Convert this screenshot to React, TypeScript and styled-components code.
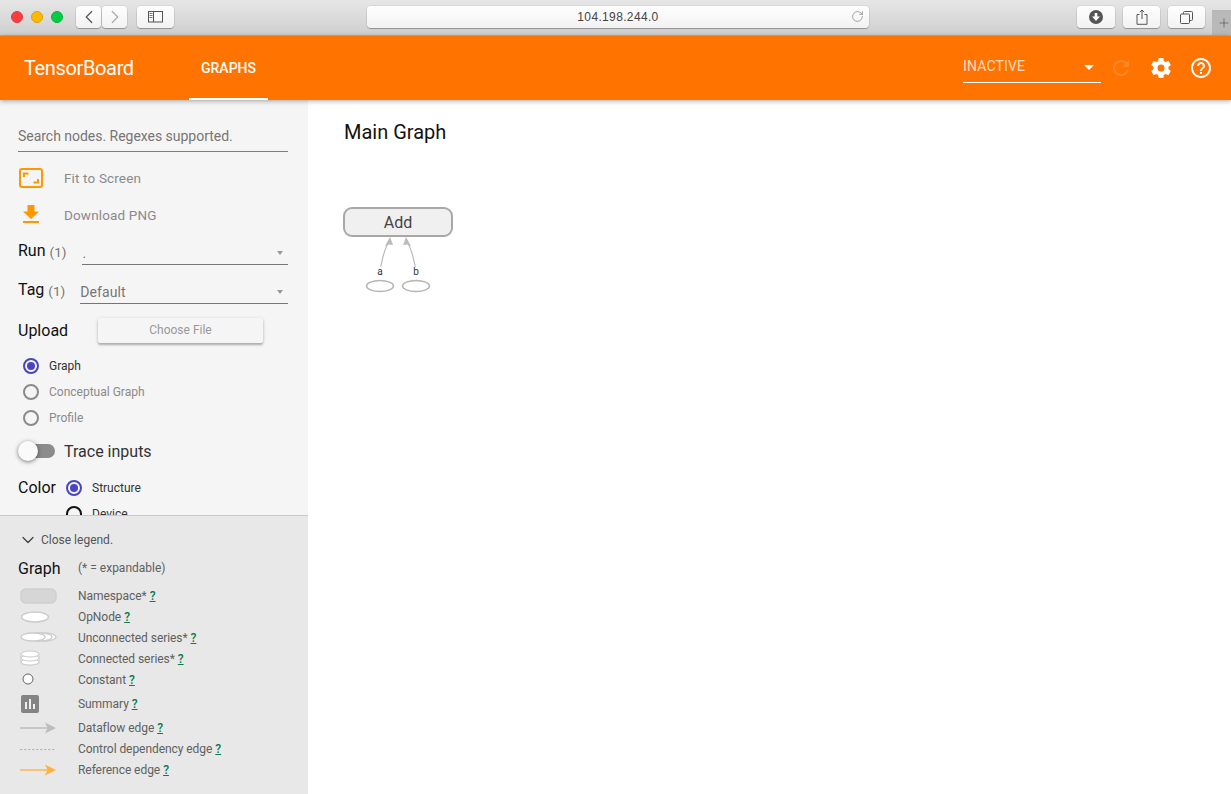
import React from "react";
import styled, { createGlobalStyle } from "styled-components";
import { ChevronDown, ChevronLeft, ChevronRight, Plus, RotateCw } from "lucide-react";

const GlobalStyle = createGlobalStyle`
  html, body { margin: 0; padding: 0; height: 100%; overflow: hidden; }
  body { font-family: Roboto, "Noto Sans", sans-serif; background: #fff; }
`;

const Page = styled.div`
  width: 1231px;
  height: 794px;
  display: flex;
  flex-direction: column;
  overflow: hidden;
`;

/* browser chrome */
const Chrome = styled.div`
  height: 29px;
  flex: none;
  display: flex;
  align-items: flex-start;
  padding-top: 6px;
  background: linear-gradient(#e6e6e6, #cfcfcf);
  border-bottom: 1px solid #b1b1b1;
  position: relative;
`;

const Lights = styled.div`
  display: flex;
  gap: 8px;
  margin: 5px 0 0 11px;
`;

const Light = styled.span<{ $c: string; $b: string }>`
  width: 12px;
  height: 12px;
  border-radius: 50%;
  background: ${(p) => p.$c};
  border: 0.5px solid ${(p) => p.$b};
  box-sizing: border-box;
`;

const ChromeBtn = styled.div<{ $w: number }>`
  width: ${(p) => p.$w}px;
  height: 22px;
  background: linear-gradient(#fefefe, #f2f2f2);
  border-radius: 4px;
  box-shadow: 0 1px 1px rgba(0, 0, 0, 0.28), 0 0 0 0.5px rgba(0, 0, 0, 0.1);
  display: flex;
  align-items: center;
  justify-content: center;
  color: #555;
  flex: none;
`;

const NavGroup = styled.div`
  display: flex;
  gap: 1px;
  margin-left: 13px;
`;

const SidebarBtnWrap = styled.div`
  margin-left: 10px;
`;

const AddressBar = styled(ChromeBtn)`
  margin-left: 193px;
  position: relative;
  font-size: 12px;
  letter-spacing: 0.35px;
  color: #444;
  font-family: "Liberation Sans", sans-serif;
`;

const Reload = styled.span`
  position: absolute;
  right: 5px;
  top: 4px;
  color: #777;
  display: flex;
`;

const RightBtns = styled.div`
  display: flex;
  gap: 8px;
  margin-left: 208px;
`;

const NewTab = styled.div`
  position: absolute;
  right: 0;
  top: 10px;
  bottom: 0;
  width: 19px;
  background: #b9b9b9;
  color: #444;
  display: flex;
  align-items: center;
  justify-content: center;
  padding-left: 5px;
  box-sizing: border-box;
`;

/* tensorboard toolbar */
const Toolbar = styled.header`
  height: 64px;
  flex: none;
  background: #ff7300;
  display: flex;
  align-items: stretch;
  color: #fff;
  box-shadow: 0 1px 5px rgba(0, 0, 0, 0.35);
  position: relative;
  z-index: 2;
`;

const Brand = styled.div`
  font-size: 20px;
  letter-spacing: -0.36px;
  margin-left: 24px;
  line-height: 64px;
  width: 165px;
  flex: none;
`;

const Tab = styled.div`
  width: 79px;
  font-size: 14px;
  font-weight: 500;
  text-align: center;
  line-height: 64px;
  position: relative;
  &::after {
    content: "";
    position: absolute;
    left: 0;
    right: 0;
    bottom: 0;
    height: 2px;
    background: #fff;
  }
`;

const ToolbarRight = styled.div`
  margin-left: auto;
  display: flex;
  align-items: center;
  padding-right: 18px;
`;

const RunSelect = styled.div`
  width: 138px;
  height: 29px;
  padding: 3px 0 2px;
  margin-top: -5px;
  border-bottom: 1px solid #fff;
  display: flex;
  align-items: center;
  justify-content: space-between;
  font-size: 14px;
  letter-spacing: 0.15px;
  color: rgba(255, 255, 255, 0.75);
`;

const WhiteCaret = styled.span`
  width: 0;
  height: 0;
  border-left: 5px solid transparent;
  border-right: 5px solid transparent;
  border-top: 5px solid #fff;
  margin-right: 7px;
  margin-top: 4px;
`;

const ToolIcons = styled.div`
  display: flex;
  align-items: center;
  gap: 16px;
  margin-left: 8px;
`;

/* main body */
const Body = styled.div`
  flex: 1;
  display: flex;
  min-height: 0;
`;

const Sidebar = styled.aside`
  width: 308px;
  flex: none;
  display: flex;
  flex-direction: column;
  background: #f5f5f5;
`;

const Controls = styled.div`
  height: 415px;
  flex: none;
  overflow: hidden;
  padding: 0 20px 0 18px;
  box-sizing: border-box;
  display: flex;
  flex-direction: column;
`;

const SearchField = styled.div`
  margin-top: 25px;
  height: 26px;
  flex: none;
  border-bottom: 1px solid #7d7d7d;
  font-size: 14px;
  line-height: 22px;
  color: #757575;
  letter-spacing: -0.025px;
`;

const ActionRow = styled.div<{ $top: number }>`
  display: flex;
  align-items: center;
  height: 30px;
  flex: none;
  margin-top: ${(p) => p.$top}px;
  font-size: 13.5px;
  letter-spacing: 0.15px;
  color: #8a8a8a;
`;

const ActionIcon = styled.span`
  width: 46px;
  flex: none;
  display: flex;
  align-items: center;
`;

const SelectRow = styled.div<{ $top: number }>`
  display: flex;
  align-items: flex-end;
  flex: none;
  margin-top: ${(p) => p.$top}px;
  height: 29px;
`;

const FieldLabel = styled.span`
  font-size: 16px;
  color: #111;
  line-height: 24px;
  align-self: flex-start;
  margin-top: 3px;
`;

const Count = styled.span`
  font-size: 13.5px;
  color: #757575;
  margin-left: 4px;
  line-height: 24px;
  align-self: flex-start;
  margin-top: 4px;
`;

const Dropdown = styled.div<{ $left: number }>`
  flex: 1;
  margin-left: ${(p) => p.$left}px;
  height: 29px;
  border-bottom: 1px solid #757575;
  display: flex;
  align-items: flex-end;
  justify-content: space-between;
  font-size: 14px;
  line-height: 22px;
  color: #757575;
  letter-spacing: 0.1px;
  box-sizing: border-box;
`;

const GreyCaret = styled.span`
  width: 0;
  height: 0;
  border-left: 3px solid transparent;
  border-right: 3px solid transparent;
  border-top: 4px solid #999;
  margin: 0 5px 9px 0;
`;

const UploadRow = styled.div`
  display: flex;
  align-items: center;
  flex: none;
  margin-top: 12px;
  height: 28px;
`;

const UploadLabel = styled.span`
  font-size: 16px;
  color: #111;
  width: 80px;
  flex: none;
`;

const ChooseFile = styled.div`
  width: 165px;
  height: 25px;
  background: #f5f5f5;
  border-radius: 2px;
  box-shadow: 0 2px 2px rgba(0, 0, 0, 0.22), 0 1px 4px rgba(0, 0, 0, 0.14);
  font-size: 12px;
  line-height: 25px;
  text-align: center;
  color: #999;
`;

const RadioList = styled.div`
  display: flex;
  flex-direction: column;
  flex: none;
  margin-top: 9px;
  padding-left: 5px;
`;

const RadioRow = styled.div<{ $off?: boolean }>`
  height: 26px;
  flex: none;
  display: flex;
  align-items: center;
  gap: 10px;
  font-size: 12px;
  color: ${(p) => (p.$off ? "#8a8a8a" : "#333")};
`;

const RadioDot = styled.span<{ $state: "on" | "off" | "dark" }>`
  width: 16px;
  height: 16px;
  box-sizing: border-box;
  border-radius: 50%;
  flex: none;
  border: 2px solid
    ${(p) => (p.$state === "on" ? "#4a44bf" : p.$state === "dark" ? "#111" : "#8a8a8a")};
  display: flex;
  align-items: center;
  justify-content: center;
  &::after {
    content: "";
    width: 8px;
    height: 8px;
    border-radius: 50%;
    background: ${(p) => (p.$state === "on" ? "#4a44bf" : "transparent")};
  }
`;

const ToggleRow = styled.div`
  display: flex;
  align-items: center;
  flex: none;
  height: 28px;
  margin-top: 6px;
  font-size: 16px;
  color: #333;
`;

const ToggleTrack = styled.span`
  position: relative;
  width: 36px;
  height: 14px;
  margin-left: 1px;
  margin-right: 9px;
  background: #8c8c8c;
  border-radius: 7px;
  flex: none;
`;

const ToggleThumb = styled.span`
  position: absolute;
  left: -1px;
  top: -3px;
  width: 20px;
  height: 20px;
  border-radius: 50%;
  background: #fafafa;
  box-shadow: 0 1px 4px rgba(0, 0, 0, 0.5);
`;

const ColorRow = styled.div`
  display: flex;
  flex: none;
  margin-top: 10px;
`;

const ColorLabel = styled.span`
  font-size: 16px;
  color: #111;
  width: 48px;
  line-height: 26px;
  flex: none;
`;

const ColorOptions = styled.div`
  display: flex;
  flex-direction: column;
`;

const Legend = styled.div`
  flex: 1;
  background: #e8e8e8;
  border-top: 1px solid #c9c9c9;
  padding: 14px 0 0 18px;
`;

const LegendToggle = styled.div`
  display: flex;
  align-items: center;
  gap: 3px;
  font-size: 12px;
  color: #555;
  height: 20px;
`;

const LegendHead = styled.div`
  display: flex;
  align-items: center;
  height: 24px;
  margin: 6px 0 5px;
`;

const LegendTitle = styled.span`
  font-size: 16px;
  color: #111;
  width: 60px;
`;

const LegendNote = styled.span`
  font-size: 12px;
  color: #606060;
`;

const LegendRow = styled.div<{ $h: number }>`
  display: flex;
  align-items: center;
  height: ${(p) => p.$h}px;
  font-size: 12px;
  letter-spacing: -0.06px;
  color: #606060;
`;

const LegendIcon = styled.span`
  width: 60px;
  flex: none;
  display: flex;
  align-items: center;
`;

const HelpLink = styled.span`
  color: #0b7a4b;
  font-weight: 500;
  text-decoration: underline;
  margin-left: 3px;
`;

const Main = styled.main`
  flex: 1;
  background: #fff;
  padding: 19px 0 0 35px;
`;

const GraphTitle = styled.h1`
  margin: 0 0 0 1px;
  font-size: 20px;
  font-weight: 400;
  line-height: 26px;
  color: #111;
`;

const GraphCanvas = styled.svg`
  display: block;
  margin-top: 62px;
  margin-left: -1px;
  overflow: visible;
`;

const legendItems: { label: string; h: number; icon: React.ReactNode }[] = [
  {
    label: "Namespace*",
    h: 21,
    icon: (
      <svg width="40" height="18" viewBox="0 0 40 18">
        <rect x="3" y="2" width="35" height="14" rx="5" fill="#d6d6d6" stroke="#cfcfcf" strokeWidth="1.5" />
      </svg>
    ),
  },
  {
    label: "OpNode",
    h: 21,
    icon: (
      <svg width="40" height="14" viewBox="0 0 40 14">
        <ellipse cx="17" cy="7" rx="13.5" ry="5" fill="#fff" stroke="#ccc" strokeWidth="1.5" />
      </svg>
    ),
  },
  {
    label: "Unconnected series*",
    h: 21,
    icon: (
      <svg width="40" height="14" viewBox="0 0 40 14">
        <ellipse cx="26" cy="6" rx="12" ry="4" fill="#fff" stroke="#ccc" strokeWidth="1.3" />
        <ellipse cx="22" cy="6" rx="12" ry="4" fill="#fff" stroke="#ccc" strokeWidth="1.3" />
        <ellipse cx="15" cy="6" rx="12" ry="4" fill="#fff" stroke="#ccc" strokeWidth="1.3" />
      </svg>
    ),
  },
  {
    label: "Connected series*",
    h: 21,
    icon: (
      <svg width="40" height="18" viewBox="0 0 40 18">
        <path d="M3 4v9c0 2.5 18 2.5 18 0V4" fill="#fff" stroke="#ccc" />
        <ellipse cx="12" cy="12" rx="9" ry="3" fill="#fff" stroke="#ccc" />
        <ellipse cx="12" cy="8" rx="9" ry="3" fill="#fff" stroke="#ccc" />
        <ellipse cx="12" cy="4" rx="9" ry="3" fill="#fff" stroke="#ccc" />
      </svg>
    ),
  },
  {
    label: "Constant",
    h: 21,
    icon: (
      <svg width="40" height="14" viewBox="0 0 40 14">
        <circle cx="10" cy="6" r="5" fill="#fff" stroke="#555" strokeWidth="0.9" />
      </svg>
    ),
  },
  {
    label: "Summary",
    h: 27,
    icon: (
      <svg width="40" height="18" viewBox="0 0 40 18">
        <rect x="3" y="0" width="18" height="18" rx="2" fill="#848484" />
        <rect x="7" y="7" width="2" height="7" fill="#eee" />
        <rect x="11" y="4" width="2" height="10" fill="#eee" />
        <rect x="15" y="9" width="2" height="5" fill="#eee" />
      </svg>
    ),
  },
  {
    label: "Dataflow edge",
    h: 21,
    icon: (
      <svg width="40" height="14" viewBox="0 0 40 14">
        <path d="M2 7h30" stroke="#bdbdbd" strokeWidth="1.5" />
        <path d="M27 1.5 38 7l-11 5.5 2.5-5.5z" fill="#bdbdbd" />
      </svg>
    ),
  },
  {
    label: "Control dependency edge",
    h: 21,
    icon: (
      <svg width="40" height="14" viewBox="0 0 40 14">
        <path d="M2 7.5h36" stroke="#b5b5b5" strokeWidth="1" strokeDasharray="2.5 1.5" />
      </svg>
    ),
  },
  {
    label: "Reference edge",
    h: 21,
    icon: (
      <svg width="40" height="14" viewBox="0 0 40 14">
        <path d="M2 7h30" stroke="#ffb74d" strokeWidth="1.5" />
        <path d="M27 1.5 38 7l-11 5.5 2.5-5.5z" fill="#ffb13d" />
      </svg>
    ),
  },
];

const App = () => (
  <Page>
    <GlobalStyle />
    <Chrome>
      <Lights>
        <Light $c="#fc3d3f" $b="#e0383a" />
        <Light $c="#fdb900" $b="#e0a300" />
        <Light $c="#05cb41" $b="#04b53a" />
      </Lights>
      <NavGroup>
        <ChromeBtn $w={25}>
          <ChevronLeft size={22} strokeWidth={1.3} color="#555" />
        </ChromeBtn>
        <ChromeBtn $w={25}>
          <ChevronRight size={22} strokeWidth={1.3} color="#aaa" />
        </ChromeBtn>
      </NavGroup>
      <SidebarBtnWrap>
        <ChromeBtn $w={37}>
          <svg width="16" height="12" viewBox="0 0 16 12">
            <rect x="0.5" y="0.5" width="14" height="10.5" fill="none" stroke="#555" />
            <path d="M5.5 0.5v10.5" stroke="#555" />
            <path d="M1.5 2.5h3M1.5 4.5h3M1.5 6.5h3" stroke="#777" />
          </svg>
        </ChromeBtn>
      </SidebarBtnWrap>
      <AddressBar $w={502}>
        104.198.244.0
        <Reload>
          <RotateCw size={13} strokeWidth={1.2} />
        </Reload>
      </AddressBar>
      <RightBtns>
        <ChromeBtn $w={38}>
          <svg width="14" height="14" viewBox="0 0 14 14">
            <circle cx="7" cy="7" r="7" fill="#555" />
            <path d="M5.7 3h2.6v3.6H11L7 11 3 6.6h2.7z" fill="#fff" />
          </svg>
        </ChromeBtn>
        <ChromeBtn $w={37}>
          <svg width="12" height="16" viewBox="0 0 12 16">
            <path d="M3.5 5.5H1v9.8h10V5.500H8.5" fill="none" stroke="#555" />
            <path d="M6 10V1M3.8 3.2 6 1l2.2 2.2" fill="none" stroke="#555" />
          </svg>
        </ChromeBtn>
        <ChromeBtn $w={37}>
          <svg width="13" height="13" viewBox="0 0 13 13">
            <rect x="3.5" y="0.5" width="9" height="9" rx="1" fill="none" stroke="#555" />
            <rect x="0.5" y="3" width="9" height="9.5" rx="1" fill="#f8f8f8" stroke="#555" />
          </svg>
        </ChromeBtn>
      </RightBtns>
      <NewTab>
        <Plus size={16} strokeWidth={1} />
      </NewTab>
    </Chrome>

    <Toolbar>
      <Brand>TensorBoard</Brand>
      <Tab>GRAPHS</Tab>
      <ToolbarRight>
        <RunSelect>
          INACTIVE
          <WhiteCaret />
        </RunSelect>
        <ToolIcons>
          <svg width="24" height="24" viewBox="0 0 24 24" fill="rgba(255,255,255,0.15)">
            <path d="M17.65 6.35A7.96 7.96 0 0 0 12 4a8 8 0 1 0 7.73 10h-2.08A6 6 0 1 1 12 6c1.66 0 3.14.69 4.22 1.78L13 11h7V4l-2.35 2.35z" />
          </svg>
          <svg width="24" height="24" viewBox="0 0 24 24" fill="#fff">
            <path d="M19.43 12.98c.04-.32.07-.64.07-.98s-.03-.66-.07-.98l2.11-1.65c.19-.15.24-.42.12-.64l-2-3.46c-.12-.22-.39-.3-.61-.22l-2.49 1c-.52-.4-1.08-.73-1.69-.98l-.38-2.65A.49.49 0 0 0 14 2h-4c-.25 0-.46.18-.49.42l-.38 2.65c-.61.25-1.17.59-1.69.98l-2.49-1c-.23-.09-.49 0-.61.22l-2 3.46c-.13.22-.07.49.12.64l2.11 1.65c-.04.32-.07.65-.07.98s.03.66.07.98l-2.11 1.65c-.19.15-.24.42-.12.64l2 3.46c.12.22.39.3.61.22l2.49-1c.52.4 1.08.73 1.69.98l.38 2.65c.03.24.24.42.49.42h4c.25 0 .46-.18.49-.42l.38-2.65c.61-.25 1.17-.59 1.69-.98l2.49 1c.23.09.49 0 .61-.22l2-3.46c.12-.22.07-.49-.12-.64l-2.11-1.65zM12 15.5a3.5 3.5 0 1 1 0-7 3.5 3.5 0 0 1 0 7z" />
          </svg>
          <svg width="24" height="24" viewBox="0 0 24 24" fill="#fff">
            <path d="M11 18h2v-2h-2v2zm1-16C6.48 2 2 6.48 2 12s4.48 10 10 10 10-4.48 10-10S17.52 2 12 2zm0 18c-4.41 0-8-3.59-8-8s3.59-8 8-8 8 3.59 8 8-3.59 8-8 8zm0-14c-2.21 0-4 1.79-4 4h2c0-1.1.9-2 2-2s2 .9 2 2c0 2-3 1.75-3 5h2c0-2.25 3-2.5 3-5 0-2.21-1.79-4-4-4z" />
          </svg>
        </ToolIcons>
      </ToolbarRight>
    </Toolbar>

    <Body>
      <Sidebar>
        <Controls>
          <SearchField>Search nodes. Regexes supported.</SearchField>
          <ActionRow $top={11}>
            <ActionIcon>
              <svg width="26" height="20" viewBox="0 0 26 20">
                <rect x="2" y="1" width="22" height="18" rx="2" fill="none" stroke="#ff9800" strokeWidth="2" />
                <path d="M6 9V5.5h4.500M20 11v3.500h-4.500" fill="none" stroke="#ff9800" strokeWidth="2" />
              </svg>
            </ActionIcon>
            Fit to Screen
          </ActionRow>
          <ActionRow $top={7}>
            <ActionIcon>
              <svg width="26" height="20" viewBox="0 0 26 20">
                <path d="M9.500 0h7v6.500H21L13 14 5 6.500h4.500z" fill="#ff9800" />
                <rect x="5" y="16" width="16" height="2" fill="#ff9800" />
              </svg>
            </ActionIcon>
            Download PNG
          </ActionRow>
          <SelectRow $top={6}>
            <FieldLabel>Run</FieldLabel>
            <Count>(1)</Count>
            <Dropdown $left={16}>
              .
              <GreyCaret />
            </Dropdown>
          </SelectRow>
          <SelectRow $top={10}>
            <FieldLabel>Tag</FieldLabel>
            <Count>(1)</Count>
            <Dropdown $left={15}>
              Default
              <GreyCaret />
            </Dropdown>
          </SelectRow>
          <UploadRow>
            <UploadLabel>Upload</UploadLabel>
            <ChooseFile>Choose File</ChooseFile>
          </UploadRow>
          <RadioList>
            <RadioRow>
              <RadioDot $state="on" />
              Graph
            </RadioRow>
            <RadioRow $off>
              <RadioDot $state="off" />
              Conceptual Graph
            </RadioRow>
            <RadioRow $off>
              <RadioDot $state="off" />
              Profile
            </RadioRow>
          </RadioList>
          <ToggleRow>
            <ToggleTrack>
              <ToggleThumb />
            </ToggleTrack>
            Trace inputs
          </ToggleRow>
          <ColorRow>
            <ColorLabel>Color</ColorLabel>
            <ColorOptions>
              <RadioRow>
                <RadioDot $state="on" />
                Structure
              </RadioRow>
              <RadioRow>
                <RadioDot $state="dark" />
                Device
              </RadioRow>
            </ColorOptions>
          </ColorRow>
        </Controls>
        <Legend>
          <LegendToggle>
            <ChevronDown size={20} strokeWidth={1.6} color="#444" />
            Close legend.
          </LegendToggle>
          <LegendHead>
            <LegendTitle>Graph</LegendTitle>
            <LegendNote>(* = expandable)</LegendNote>
          </LegendHead>
          {legendItems.map((item) => (
            <LegendRow key={item.label} $h={item.h}>
              <LegendIcon>{item.icon}</LegendIcon>
              {item.label}
              <HelpLink>?</HelpLink>
            </LegendRow>
          ))}
        </Legend>
      </Sidebar>
      <Main>
        <GraphTitle>Main Graph</GraphTitle>
        <GraphCanvas width="125" height="100" viewBox="0 0 125 100">
          <rect x="2" y="1" width="108" height="28" rx="8" fill="#f0f0f0" stroke="#a8a8a8" strokeWidth="2" />
          <text x="56" y="21" textAnchor="middle" fontSize="16" fill="#444" fontFamily="Roboto, sans-serif">
            Add
          </text>
          <path d="M38 70C38 58 41 46 47 34M74 70C74 58 71 46 65 34" fill="none" stroke="#bbb" strokeWidth="1.2" />
          <path d="M48 30 51 38 47 37.500 43 39zM64 30 61 38 65 37.500 69 39z" fill="#bbb" />
          <rect x="34" y="60" width="8" height="11" fill="#fff" />
          <rect x="70" y="60" width="8" height="11" fill="#fff" />
          <text x="38" y="68" textAnchor="middle" fontSize="10" fill="#333" fontFamily="Roboto, sans-serif">
            a
          </text>
          <text x="74" y="68" textAnchor="middle" fontSize="10" fill="#333" fontFamily="Roboto, sans-serif">
            b
          </text>
          <ellipse cx="38" cy="79" rx="13.500" ry="5.500" fill="#fff" stroke="#b5b5b5" strokeWidth="1.500" />
          <ellipse cx="74" cy="79" rx="13.500" ry="5.500" fill="#fff" stroke="#b5b5b5" strokeWidth="1.500" />
        </GraphCanvas>
      </Main>
    </Body>
  </Page>
);

export default App;
